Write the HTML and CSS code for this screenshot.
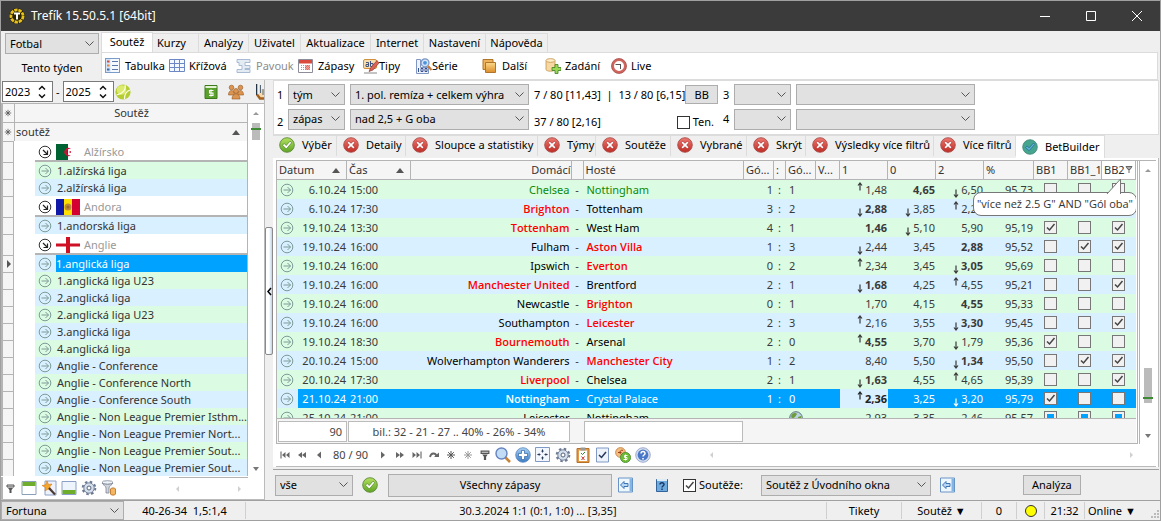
FILE: index.html
```html
<!DOCTYPE html>
<html lang="cs">
<head>
<meta charset="utf-8">
<title>Trefík</title>
<link rel="stylesheet" href="styles.css">
</head>
<body>
<svg class="defs" aria-hidden="true">
  <defs>
    <linearGradient id="gGreen" x1="0" y1="0" x2="0" y2="1"><stop offset="0" stop-color="#b4e05e"/><stop offset="1" stop-color="#5fa524"/></linearGradient>
    <linearGradient id="gRed" x1="0" y1="0" x2="0" y2="1"><stop offset="0" stop-color="#ee7a72"/><stop offset="1" stop-color="#c02a24"/></linearGradient>
    <linearGradient id="gBlue" x1="0" y1="0" x2="0" y2="1"><stop offset="0" stop-color="#a9d2f2"/><stop offset="1" stop-color="#3b7cc4"/></linearGradient>
    <linearGradient id="gGold" x1="0" y1="0" x2="0" y2="1"><stop offset="0" stop-color="#fbd98a"/><stop offset="1" stop-color="#dc8d2c"/></linearGradient>
  </defs>
  <symbol id="logo" viewBox="0 0 16 16"><circle cx="8" cy="8" r="7.8" fill="#111"/><circle cx="8" cy="8" r="6.1" fill="#2a2200" stroke="#e8c21a" stroke-width="2.8" stroke-dasharray="3.4 .8"/><path d="M5 4.500h6v2H9v5H7v-5H5z" fill="#fff"/></symbol>
  <symbol id="list" viewBox="0 0 16 16"><rect x=".5" y=".5" width="14" height="14" fill="#f6faff" stroke="#7a9cc9"/><path d="M1 1h4.500v13H1z" fill="#d5e4f6"/><path d="M2 2.500h2.500v2H2z" fill="#d2483a"/><path d="M2 6.500h2.500v2H2z" fill="#e08a3a"/><path d="M2 10.500h2.500v2H2z" fill="#3767ad"/><path d="M7 3.500h6M7 7.500h6M7 11.500h6" stroke="#5a78a8"/></symbol>
  <symbol id="gridi" viewBox="0 0 16 16"><path d="M.5 1.500h15v12H.5z" fill="#f4f9ff"/><path d="M.5 1.500h15v12H.5zM.5 5.500h15M.5 9.500h15M5.500 1.500v12M10.500 1.500v12" fill="none" stroke="#6d88c4"/></symbol>
  <symbol id="spider" viewBox="0 0 16 16"><path d="M1 1.500h13v3H9v3h5v3H9v1h5v3H1v-3h5v-4H3v-3H1z" fill="#e4ebf3" stroke="#a9bbd2"/></symbol>
  <symbol id="cal" viewBox="0 0 16 16"><path d="M.5 1.500h14v13H.5z" fill="#fff" stroke="#8c8c9a"/><path d="M1 2h13v3.500H1z" fill="#d9493c"/><path d="M3 7.500h9M3 9.500h9M3 11.500h9" stroke="#9a9aa5" stroke-dasharray="1 1"/><path d="M8 8h3v3H8z" fill="none" stroke="#d9493c"/></symbol>
  <symbol id="tips" viewBox="0 0 16 16"><rect x=".5" y="1.500" width="13" height="9" rx="1.500" fill="#f7dcae" stroke="#d0913c"/><path d="M3 4.500h2.500v4H3V6.500h2.500M7.500 3v5.500H10V5.500H7.500" fill="none" stroke="#42557c"/><path d="M14 2.500L16 5 10 12 6 13.500 7.500 10z" fill="#d9655a" stroke="#8a2820" stroke-width=".6"/><path d="M1 15h13" stroke="#c4c4c4" stroke-width="2"/></symbol>
  <symbol id="serie" viewBox="0 0 16 16"><path d="M.5 1.500h4v8h8v6H.5z" fill="#eef2fb" stroke="#8096c4"/><path d="M2.500 10v4M5 10.500h2v3H5zM9 10.500h2v3H9z" fill="none" stroke="#384f8e"/><circle cx="9" cy="4.800" r="4" fill="#cfe4fa" stroke="#7d95c0" stroke-width="1.300"/><circle cx="9" cy="4.800" r="1.900" fill="#4b91dc"/><path d="M12 8l3.500 4" stroke="#c67b36" stroke-width="2.200"/></symbol>
  <symbol id="folders" viewBox="0 0 16 16"><path d="M1 1.500h10v10H1z" fill="#eeb25a" stroke="#b0742a"/><path d="M3.500 4.500h10v10h-10z" fill="url(#gGold)" stroke="#b0742a"/></symbol>
  <symbol id="dbadd" viewBox="0 0 16 16"><path d="M1 2.500v9c0 2.300 9 2.300 9 0v-9z" fill="#f6d8a0" stroke="#c5964d" stroke-width=".8"/><ellipse cx="5.500" cy="2.500" rx="4.500" ry="1.900" fill="#fdecc9" stroke="#c5964d" stroke-width=".8"/><path d="M10 6.500h3v3h3v3h-3v3h-3v-3H7v-3h3z" fill="#9ad956" stroke="#3f7f1c" stroke-width=".8"/></symbol>
  <symbol id="live" viewBox="0 0 16 16"><circle cx="8" cy="8" r="6.300" fill="#fff" stroke="#d0655d" stroke-width="2.600"/><circle cx="8" cy="8" r="7.500" fill="none" stroke="#9d4640" stroke-width=".7"/><path d="M4.500 6.500h5M9.500 6v5" fill="none" stroke="#555"/></symbol>
  <symbol id="ball" viewBox="0 0 16 16"><circle cx="8" cy="8" r="7.600" fill="#b5cd33"/><circle cx="6.500" cy="6" r="4.800" fill="#dcea6d"/><path d="M10 1c1.500 4-2 9-8.500 10M15 6c-3 1-5.500 4-5.500 9" fill="none" stroke="#fbfde6" stroke-width="1.200"/></symbol>
  <symbol id="money" viewBox="0 0 16 16"><path d="M2 1.500h12v13H2z" fill="#5aa02c" stroke="#3d7a1c"/><path d="M2.500 2h11v2h-11z" fill="#e4f3d4"/><path d="M10.500 6.500h-4v2.500h3.500v2.500h-4M8 5.500v7" fill="none" stroke="#fff" stroke-width="1.100"/></symbol>
  <symbol id="people" viewBox="0 0 16 16"><g fill="#dc9450" stroke="#94581f" stroke-width=".6"><circle cx="3.500" cy="3.500" r="2.300"/><circle cx="12.500" cy="3.500" r="2.300"/><path d="M.5 11c0-6 6-6 6 0zM9.500 11c0-6 6-6 6 0z"/><circle cx="8" cy="7" r="2.500"/><path d="M4 15c0-7 8-7 8 0z"/></g></symbol>
  <symbol id="hand" viewBox="0 0 8 16"><path d="M3 1v10l2 3h3V6L5 5V1z" fill="#f8d9a8"/><path d="M.5 0v11" stroke="#234" stroke-width="1.500"/><path d="M4.500 1v8M7 5v6" stroke="#567" stroke-width="1"/><path d="M1 10.500l3 4h4" fill="none" stroke="#a2601c" stroke-width="2.500"/></symbol>
  <symbol id="ok" viewBox="0 0 16 16"><circle cx="8" cy="8" r="7.300" fill="url(#gGreen)" stroke="#5d8a3a" stroke-width=".9"/><path d="M3.500 8.200l1.700-1.700 2 2 3.800-4.300 1.700 1.500-5.400 6.300z" fill="#fff" stroke="#4a8020" stroke-width=".7"/></symbol>
  <symbol id="no" viewBox="0 0 16 16"><circle cx="8" cy="8" r="7.300" fill="url(#gRed)" stroke="#a8504a" stroke-width=".9"/><path d="M4.200 5.700l1.500-1.500L8 6.300l2.300-2.100 1.500 1.500L9.700 8l2.100 2.300-1.500 1.500L8 9.700l-2.300 2.100-1.500-1.500L6.300 8z" fill="#fff" stroke="#9c1a16" stroke-width=".6"/></symbol>
  <symbol id="bb" viewBox="0 0 16 16"><circle cx="8" cy="8" r="7.300" fill="#46a58e" stroke="#3c8575" stroke-width=".8"/><path d="M3.500 8.500l1.600-1.600 2 2L11.500 4l1.300 1.300-5.700 6.500z" fill="#5db4d8" stroke="#276f95" stroke-width=".8"/></symbol>
  <symbol id="go" viewBox="0 0 14 14"><circle cx="7" cy="7" r="5.800" fill="none" stroke="currentColor" stroke-width="1"/><path d="M3.500 7h7M7.500 4l3 3-3 3" fill="none" stroke="currentColor"/></symbol>
  <symbol id="down" viewBox="0 0 14 14"><circle cx="7" cy="7" r="5.800" fill="#fff" stroke="#333"/><path d="M5 5l4 4M9.500 5.500v4h-4" fill="none" stroke="#222" stroke-width="1.200"/></symbol>
  <symbol id="up-arrow" viewBox="0 0 6 9"><path d="M3 8.500V1M1 3.500l2-2.500 2 2.500" fill="none" stroke="currentColor" stroke-width="1.200"/></symbol>
  <symbol id="down-arrow" viewBox="0 0 6 9"><path d="M3 .5V8M1 5.500L3 8l2-2.500" fill="none" stroke="currentColor" stroke-width="1.200"/></symbol>
  <symbol id="f-dz" viewBox="0 0 24 16"><path d="M0 0h12v16H0z" fill="#006233"/><path d="M12 0h12v16H12z" fill="#fff"/><path d="M15 5a4 4 0 1 0 0 6 3.200 3.200 0 1 1 0-6zM12.500 8l2.500-1v2z" fill="#d21034"/></symbol>
  <symbol id="f-ad" viewBox="0 0 24 16"><path d="M0 0h8v16H0z" fill="#1018a8"/><path d="M8 0h8v16H8z" fill="#fedf00"/><path d="M16 0h8v16h-8z" fill="#d50032"/><circle cx="12" cy="8" r="3.500" fill="#c08a3a"/><circle cx="12" cy="8" r="1.500" fill="#9d6a28"/></symbol>
  <symbol id="f-en" viewBox="0 0 24 16"><path d="M0 0h24v16H0z" fill="#fff"/><path d="M10 0h4v16h-4zM0 6.500h24v3H0z" fill="#ce1124"/></symbol>
  <symbol id="funnel" viewBox="0 0 9 9"><path d="M1 1h7v2H1z" fill="#ddd" stroke="#555"/><path d="M2 4h5L5.500 6v3h-2V6z" fill="#555"/></symbol>
  <symbol id="ptop" viewBox="0 0 16 16"><path d="M1 1.500h14v13H1z" fill="#fff" stroke="#8ba0b8"/><path d="M1.500 2h13v4h-13z" fill="#6fae2c"/></symbol>
  <symbol id="pbot" viewBox="0 0 16 16"><path d="M1 1.500h14v13H1z" fill="#eef4fc" stroke="#8ba0c8"/><path d="M1.500 10h13v4h-13z" fill="#6fae2c"/></symbol>
  <symbol id="wand" viewBox="0 0 16 16"><path d="M4 1h11v14H4z" fill="#eef3fb" stroke="#8ba0c8"/><path d="M6 1l1.500 3.500L11 4 8.500 7l2 3.500L7 9l-3 2 .5-3.500L1 5.500l4-.8z" fill="#f7a62c" stroke="#d47a14" stroke-width=".6"/><path d="M8 8l6 6.500" stroke="#4a3a35" stroke-width="2.200"/></symbol>
  <symbol id="gear" viewBox="0 0 16 16"><circle cx="8" cy="8" r="6.300" fill="none" stroke="#6b7890" stroke-width="2" stroke-dasharray="2.500 2.450"/><circle cx="8" cy="8" r="5.200" fill="#d5deeb" stroke="#77869e"/><circle cx="8" cy="8" r="2" fill="#fff" stroke="#55637c"/></symbol>
  <symbol id="dbf" viewBox="0 0 16 16"><ellipse cx="6.500" cy="2.500" rx="5.500" ry="1.800" fill="#f2f4f7" stroke="#7c8798" stroke-width=".8"/><path d="M1 3c1 2 4 3 4 5v5h3V8c0-2 3-3 4-5-2 1.800-9 1.800-11 0z" fill="#cfd4dc" stroke="#7c8798" stroke-width=".8"/><path d="M9.500 9c0-1.500 5-1.500 5 0v5c0 1.500-5 1.500-5 0z" fill="#f3b764" stroke="#b5691c" stroke-width=".8"/></symbol>
  <symbol id="mag" viewBox="0 0 16 16"><path d="M10.500 10.500l4.500 4.500" stroke="#c98335" stroke-width="2.600"/><circle cx="6.500" cy="6.500" r="5.500" fill="#c3dcf6" stroke="#6484c0" stroke-width="1.400"/></symbol>
  <symbol id="plus" viewBox="0 0 16 16"><circle cx="8" cy="8" r="7.300" fill="url(#gBlue)" stroke="#5a86bf" stroke-width=".8"/><path d="M6.500 3.500h3v3h3v3h-3v3h-3v-3h-3v-3h3z" fill="#fff" stroke="#2f63a8" stroke-width=".7"/></symbol>
  <symbol id="move" viewBox="0 0 16 16"><path d="M.5 .5h14v14H.5z" fill="#f2f6fd" stroke="#8099c5"/><path d="M7.500 2.500v3M7.500 9.500v3M2.500 7.500h3M9.500 7.500h3" stroke="#2c3a58"/><path d="M6 4.500l1.500-2 1.500 2M6 10.500l1.500 2 1.500-2M4.500 6l-2 1.500 2 1.500M10.500 6l2 1.500-2 1.500" fill="#2c3a58"/></symbol>
  <symbol id="clip" viewBox="0 0 16 16"><path d="M2 1.500h12v14H2z" fill="#e39b45" stroke="#b5702a"/><path d="M4 3.500h8v10.500H4z" fill="#fff"/><path d="M5.500 .5h5v3h-5z" fill="#999"/><path d="M6 6l1.500 1.500L10 5" fill="none" stroke="#2e8a26"/><path d="M6.500 9.500l3 3.500M9.500 9.500l-3 3.500" stroke="#c9302a"/></symbol>
  <symbol id="tick" viewBox="0 0 16 16"><path d="M1.500 1h12v14h-12z" fill="#eef3fb" stroke="#8099c5"/><path d="M4 8l2.500 2.500L11 5" fill="none" stroke="#26365c" stroke-width="1.500"/></symbol>
  <symbol id="coins" viewBox="0 0 16 16"><circle cx="5.500" cy="5.500" r="4.900" fill="#f3bd80" stroke="#c07c3a" stroke-width=".8"/><path d="M8 3.500c-4-1.500-4 5 0 4M3 5.500h3.500" fill="none" stroke="#9a3c1c"/><circle cx="10.500" cy="10.500" r="5.100" fill="#6fba36" stroke="#44852a" stroke-width=".8"/><path d="M12.500 8.500h-3v2h2.500v2H8.500M10.500 7.500v6" fill="none" stroke="#fff" stroke-width=".9"/></symbol>
  <symbol id="help" viewBox="0 0 16 16"><circle cx="8" cy="8" r="7.300" fill="#d5deef" stroke="#8a9cc4" stroke-width=".8"/><circle cx="8" cy="8" r="5.400" fill="#4a78c8"/><path d="M6 6.500c0-3 4.200-2.500 4 0C10 8 8 8 8 9.500M8 11v1.500" fill="none" stroke="#fff" stroke-width="1.500"/></symbol>
  <symbol id="back" viewBox="0 0 16 16"><path d="M.5 1h14v14H.5z" fill="#eef6fe" stroke="#6a94c6"/><path d="M11.500 1.500h2.500v13h-2.500z" fill="#84b6e3"/><path d="M2.500 8L6 4.500v2h4v3H6v2z" fill="#b7d7f5" stroke="#2d69ad" stroke-width=".9"/></symbol>
  <symbol id="book" viewBox="0 0 16 16"><path d="M2.500 2.500h11v12h-11z" fill="#6faade" stroke="#326399"/><path d="M3 2h10v2H3z" fill="#dcebf8"/><path d="M6 7.500c0-2.500 4.200-2 4 0C10 9 8 9 8 10.500M8 11.500V13" fill="none" stroke="#153561" stroke-width="1.400"/></symbol>
  <symbol id="globe" viewBox="0 0 14 14"><circle cx="7" cy="7" r="6.300" fill="#b7d3e4" stroke="#5f7478"/><path d="M2 5c2-4 5-3 6-2L6 6 3 8zM9 6l3-1v4l-3 1z" fill="#6f9d3a"/></symbol>
  <symbol id="n-first" viewBox="0 0 12 10"><path d="M2 1.500v7" stroke="#555"/><path d="M6.500 2v6L3 5zM10.500 2v6L7 5z" fill="#666"/></symbol>
  <symbol id="n-prev2" viewBox="0 0 12 10"><path d="M6 2v6L2 5zM10 2v6L6 5z" fill="#666"/></symbol>
  <symbol id="n-prev" viewBox="0 0 12 10"><path d="M8 1.500v7L4 5z" fill="#666"/></symbol>
  <symbol id="n-redo" viewBox="0 0 12 10"><path d="M2 7c1-4.500 5.500-4.500 6.500-1" fill="none" stroke="#666" stroke-width="1.800"/><path d="M6 7h5V2.500z" fill="#666"/></symbol>
  <symbol id="n-star" viewBox="0 0 12 10"><path d="M6 1v8M2 5h8M3.200 2.200l5.600 5.600M8.800 2.200L3.200 7.800" stroke="currentColor"/></symbol>
</svg>

<div class="window">
  <header class="titlebar">
    <svg class="i16"><use href="#logo"/></svg>
    <h1>Trefík 15.50.5.1 [64bit]</h1>
    <button class="winbtn" aria-label="Minimalizovat"><svg viewBox="0 0 12 12"><path d="M1 6.500h10" stroke="#fff"/></svg></button>
    <button class="winbtn" aria-label="Maximalizovat"><svg viewBox="0 0 12 12"><path d="M1.500 1.500h9v9h-9z" fill="none" stroke="#fff"/></svg></button>
    <button class="winbtn" aria-label="Zavřít"><svg viewBox="0 0 12 12"><path d="M1 1l10 10M11 1L1 11" stroke="#fff"/></svg></button>
  </header>

  <div class="ribbon">
    <div class="sport">
      <select aria-label="Sport"><option>Fotbal</option></select>
      <span>Tento týden</span>
    </div>
    <div class="menu">
      <nav class="menu-tabs">
        <button class="active">Soutěž</button><button>Kurzy</button><button>Analýzy</button><button>Uživatel</button><button>Aktualizace</button><button>Internet</button><button>Nastavení</button><button>Nápověda</button>
      </nav>
      <div class="menu-tools">
        <button><svg class="i16"><use href="#list"/></svg>Tabulka</button>
        <button><svg class="i16"><use href="#gridi"/></svg>Křížová</button>
        <button disabled><svg class="i16"><use href="#spider"/></svg>Pavouk</button>
        <button><svg class="i16"><use href="#cal"/></svg>Zápasy</button>
        <button class="tight"><svg class="i16"><use href="#tips"/></svg>Tipy</button>
        <button class="tight"><svg class="i16"><use href="#serie"/></svg>Série</button>
        <button><svg class="i16"><use href="#folders"/></svg>Další</button>
        <button><svg class="i16"><use href="#dbadd"/></svg>Zadání</button>
        <button><svg class="i16"><use href="#live"/></svg>Live</button>
      </div>
    </div>
  </div>

  <main class="main">
    <aside class="side">
      <div class="years">
        <span class="spin"><input type="text" value="2023" aria-label="Od roku"><svg viewBox="0 0 8 14"><path d="M1 4.500L4 1.500l3 3M1 9.500l3 3 3-3" fill="none" stroke="#111" stroke-width="1.500"/></svg></span>
        <span>-</span>
        <span class="spin"><input type="text" value="2025" aria-label="Do roku"><svg viewBox="0 0 8 14"><path d="M1 4.500L4 1.500l3 3M1 9.500l3 3 3-3" fill="none" stroke="#111" stroke-width="1.500"/></svg></span>
        <svg class="i16"><use href="#ball"/></svg>
        <svg class="i16 far"><use href="#money"/></svg>
        <svg class="i16 next"><use href="#people"/></svg>
        <svg class="hand"><use href="#hand"/></svg>
      </div>
      <div class="side-grid">
        <table class="leagues">
          <colgroup><col class="c-ind"><col class="c-indent"><col class="c-go"><col></colgroup>
          <thead>
            <tr><th><svg class="star"><use href="#n-star"/></svg></th><th colspan="3" class="center">Soutěž</th></tr>
            <tr><th><svg class="star"><use href="#n-star"/></svg></th><th colspan="3"><div class="split"><span>soutěž</span><i class="tri"></i></div></th></tr>
          </thead>
          <tbody id="leagues"></tbody>
        </table>
        <div class="vscroll side-scroll"><i class="sa up"></i><i class="thumb"><b></b></i><i class="sa dn"></i></div>
      </div>
      <div class="side-tools">
        <svg class="i9"><use href="#funnel"/></svg>
        <svg class="i16"><use href="#ptop"/></svg><svg class="i16"><use href="#wand"/></svg><svg class="i16"><use href="#pbot"/></svg><svg class="i16"><use href="#gear"/></svg><svg class="i16"><use href="#dbf"/></svg>
        <div class="hscroll"><i class="ha l"></i><i class="ha r"></i></div>
      </div>
    </aside>

    <div class="splitter"><button aria-label="Skrýt panel"><svg viewBox="0 0 5 9"><path d="M4 1L1 4.500 4 8" fill="none" stroke="#000" stroke-width="1.500"/></svg></button></div>

    <section class="content">
      <div class="filters">
        <label for="f1">1</label><select id="f1"><option>tým</option></select><select aria-label="Filtr 1"><option>1. pol. remíza + celkem výhra</option></select>
        <div class="stat"><span>7 / 80 [11,43] &nbsp;|&nbsp; 13 / 80 [6,15]</span><button class="btn">BB</button></div>
        <label for="f3">3</label><select id="f3"><option></option></select><select aria-label="Filtr 3"><option></option></select>
        <label class="low" for="f2">2</label><select id="f2"><option>zápas</option></select><select aria-label="Filtr 2"><option>nad 2,5 + G oba</option></select>
        <div class="stat low"><span>37 / 80 [2,16]</span><label class="check"><input type="checkbox">Ten.</label></div>
        <label for="f4">4</label><select id="f4"><option></option></select><select aria-label="Filtr 4"><option></option></select>
      </div>

      <nav class="tabs">
        <button><svg class="i16"><use href="#ok"/></svg>Výběr</button>
        <button><svg class="i16"><use href="#no"/></svg>Detaily</button>
        <button><svg class="i16"><use href="#no"/></svg>Sloupce a statistiky</button>
        <button><svg class="i16"><use href="#no"/></svg>Týmy</button>
        <button><svg class="i16"><use href="#no"/></svg>Soutěže</button>
        <button><svg class="i16"><use href="#no"/></svg>Vybrané</button>
        <button><svg class="i16"><use href="#no"/></svg>Skrýt</button>
        <button><svg class="i16"><use href="#no"/></svg>Výsledky více filtrů</button>
        <button><svg class="i16"><use href="#no"/></svg>Více filtrů</button>
        <button class="active"><svg class="i16"><use href="#bb"/></svg>BetBuilder</button>
      </nav>

      <div class="sheet">
        <div class="sheet-grid">
          <div class="grid-col">
            <div class="grid-view">
              <table class="matches">
                <colgroup><col class="w21"><col class="w49"><col class="w64"><col><col class="w12"><col><col class="w30"><col class="w12"><col class="w30"><col class="w24"><col class="w48"><col class="w48"><col class="w48"><col class="w50"><col class="w34"><col class="w34"><col class="w34"></colgroup>
                <thead><tr>
                  <th colspan="2"><div class="split"><span>Datum</span><i class="tri"></i></div></th><th><div class="split"><span>Čas</span><i class="tri"></i></div></th><th class="right">Domácí</th><th></th><th>Hosté</th><th>Gó...</th><th>:</th><th>Gó...</th><th>V...</th><th>1</th><th>0</th><th>2</th><th>%</th><th>BB1</th><th>BB1_1</th>
                  <th class="hot">BB2<svg class="pin" viewBox="0 0 8 8"><path d="M1 1.500h6l-2 3H3zM4 4v4" fill="#aaa" stroke="#666"/></svg>
                    <div class="tip" role="tooltip">"více než 2.5 G" AND "Gól oba"<svg viewBox="0 0 16 16"><path d="M0 16L13.500 1v15" fill="#fff" stroke="#777"/></svg></div>
                  </th>
                </tr></thead>
                <tbody id="matches"></tbody>
              </table>
            </div>
            <div class="totals"><span class="t1">90</span><span class="t2">bil.: 32 - 21 - 27 .. 40% - 26% - 34%</span><span class="t3"></span></div>
          </div>
          <div class="vscroll main-scroll"><i class="sa up"></i><i class="thumb"><b></b></i><i class="sa dn"></i></div>
        </div>
        <div class="navbar">
          <button aria-label="První"><svg><use href="#n-first"/></svg></button><button aria-label="O stránku zpět"><svg><use href="#n-prev2"/></svg></button><button aria-label="Předchozí"><svg><use href="#n-prev"/></svg></button>
          <span class="pos">80 / 90</span>
          <button aria-label="Další"><svg class="flip"><use href="#n-prev"/></svg></button><button aria-label="O stránku dál"><svg class="flip"><use href="#n-prev2"/></svg></button><button aria-label="Poslední"><svg class="flip"><use href="#n-first"/></svg></button>
          <button aria-label="Obnovit"><svg><use href="#n-redo"/></svg></button><button aria-label="Záložka"><svg><use href="#n-star"/></svg></button><button class="dim" aria-label="Na záložku"><svg><use href="#n-star"/></svg></button><button aria-label="Filtr"><svg><use href="#funnel"/></svg></button>
          <div class="nav-icons"><svg class="i16"><use href="#mag"/></svg><svg class="i16"><use href="#plus"/></svg><svg class="i16"><use href="#move"/></svg><svg class="i16"><use href="#gear"/></svg><svg class="i16"><use href="#clip"/></svg><svg class="i16"><use href="#tick"/></svg><svg class="i16"><use href="#coins"/></svg><svg class="i16"><use href="#help"/></svg></div>
          <div class="hscroll"><i class="ha l"></i><i class="ha r"></i></div>
        </div>
      </div>

      <div class="actions">
        <select class="a-all" aria-label="Rozsah"><option>vše</option></select>
        <svg class="i16"><use href="#ok"/></svg>
        <button class="btn a-main">Všechny zápasy</button>
        <svg class="i16"><use href="#back"/></svg>
        <svg class="i16 a-book"><use href="#book"/></svg>
        <label class="check"><input type="checkbox" checked>Soutěže:</label>
        <select class="a-comp" aria-label="Soutěže"><option>Soutěž z Úvodního okna</option></select>
        <svg class="i16"><use href="#back"/></svg>
        <button class="btn a-run">Analýza</button>
      </div>
    </section>
  </main>

  <footer class="status">
    <select aria-label="Kancelář"><option>Fortuna</option></select>
    <span>40-26-34 &nbsp;1,5:1,4</span>
    <span class="strong">30.3.2024 1:1 (0:1, 1:0) ... [3,35]</span>
    <span>Tikety</span>
    <span>Soutěž ▼</span>
    <span>0</span>
    <span><i class="lamp"></i></span>
    <span>21:32</span>
    <span class="last">Online ▼<svg class="grip" viewBox="0 0 9 9"><path d="M6 0h2v2H6zM3 3h2v2H3zM6 3h2v2H6zM0 6h2v2H0zM3 6h2v2H3zM6 6h2v2H6z" fill="#bbb"/></svg></span>
  </footer>
</div>
<script src="app.js"></script>
</body>
</html>
```

FILE: styles.css
```css
* { box-sizing: border-box; }
body, h1 { margin: 0; }
body, button, select, input {
  font-family: "Noto Sans", "Open Sans", sans-serif;
  font-size: 11px;
  line-height: 16px;
  color: #000;
}
button { padding: 0; border: 0; background: none; white-space: nowrap; }
svg { display: block; flex: none; overflow: visible; }
.defs { position: absolute; width: 0; height: 0; }
.i16 { width: 16px; height: 16px; }
.i9 { width: 9px; height: 9px; }

select {
  appearance: none;
  height: 21px;
  padding: 0 18px 0 4px;
  border: 1px solid #adadad;
  border-radius: 0;
  background: #e1e1e1 url("data:image/svg+xml,%3Csvg xmlns='http://www.w3.org/2000/svg' width='9' height='6'%3E%3Cpath d='M.5 .5l4 4 4-4' fill='none' stroke='%23555'/%3E%3C/svg%3E") no-repeat right 4px center;
  min-width: 0;
}
.btn { border: 1px solid #adadad; background: #e1e1e1; }

input[type="checkbox"] {
  appearance: none;
  flex: none;
  display: block;
  width: 13px;
  height: 13px;
  margin: 0;
  border: 1px solid #333;
  background: #fff no-repeat center;
}
input[type="checkbox"]:checked {
  background-image: url("data:image/svg+xml,%3Csvg xmlns='http://www.w3.org/2000/svg' width='11' height='11'%3E%3Cpath d='M2 5.500l2.500 2.500 5-6' fill='none' stroke='%23444' stroke-width='1.500'/%3E%3C/svg%3E");
}
.check { display: flex; align-items: center; gap: 3px; }

.window {
  display: flex;
  flex-direction: column;
  height: 100vh;
  border: 1px solid #a0a0a0;
  background: #efefef;
}

/* title bar */
.titlebar { display: flex; align-items: center; height: 30px; flex: none; padding-left: 8px; background: #3b3b3b; }
.titlebar h1 { flex: 1; margin-left: 6px; font-size: 12px; font-weight: 400; color: #fff; }
.winbtn { display: grid; place-items: center; width: 46px; height: 30px; }
.winbtn svg { width: 12px; height: 12px; }

/* ribbon */
.ribbon { display: flex; flex: none; height: 49px; }
.sport { display: flex; flex-direction: column; width: 100px; padding: 2px 2px 0 4px; text-align: center; }
.sport span { margin-top: 6px; }
.menu { flex: 1; display: flex; flex-direction: column; padding-right: 2px; }
.menu-tabs { display: grid; grid-template-columns: 52px 46px 50px 52px 70px 53px 62px 62px; align-items: end; height: 21px; }
.menu-tabs button { height: 19px; border: 1px solid #dcdcdc; border-width: 1px 1px 0 0; }
.menu-tabs button:nth-child(2) { padding-right: 8px; }
.menu-tabs .active { height: 21px; margin-bottom: -1px; padding-bottom: 2px; border-left-width: 1px; background: #fff; }
.menu-tools {
  display: grid;
  grid-template-columns: 64px 67px 62px 65px 53px 66px 63px 66px 60px;
  height: 28px;
  padding-left: 3px;
  border: 1px solid #dcdcdc;
  background: #fff;
}
.menu-tools button { display: flex; align-items: center; gap: 4px; }
.menu-tools .tight { gap: 0; }
.menu-tools button:disabled { color: #8c8c8c; }

.main { flex: 1; display: flex; min-height: 0; }

/* left panel */
.side { display: flex; flex-direction: column; width: 264px; background: #fff; border-right: 1px solid #bbb; border-bottom: 1px solid #bbb; }
.years { display: flex; align-items: center; height: 23px; padding-left: 1px; background: #efefef; }
.years > span { flex: none; }
.years > span + span { margin-left: 3px; }
.years > .i16 { margin-left: 1px; }
.years > .far { margin-left: 72px; }
.years > .next { margin-left: 9px; }
.hand { width: 8px; height: 16px; margin-left: 12px; }
.spin { display: flex; align-items: center; width: 51px; height: 21px; padding-right: 6px; border: 1px solid #7a7a7a; background: #fff; }
.spin input { flex: 1; min-width: 0; padding: 0 0 0 2px; border: 0; background: none; }
.spin svg { width: 8px; height: 14px; }
.side-grid { flex: 1; display: flex; min-height: 0; overflow: hidden; }
table { border-collapse: separate; border-spacing: 0; table-layout: fixed; }
th, td { padding: 0; white-space: nowrap; overflow: hidden; font-weight: 400; text-align: left; }
.leagues { flex: 1; width: 0; height: max-content; border-left: 2px solid #b4b4b4; border-right: 1px solid #b4b4b4; color: #333; }
.c-ind { width: 11px; }
.c-indent { width: 21px; }
.c-go { width: 21px; }
.leagues th { height: 19px; border-top: 1px solid #b4b4b4; background: #f5f5f5; border-left: 1px solid #b4b4b4; padding-left: 1px; }
.leagues th:first-child { border-left: 0; padding: 0; }
.leagues .center { text-align: center; }
.leagues td:first-child { background: #f5f5f5; border-right: 1px solid #b4b4b4; border-top: 1px solid #b4b4b4; }
.leagues td { height: 17px; line-height: 16px; }
.leagues td svg { width: 14px; height: 14px; margin-left: 3px; }
.leagues .country td { height: 21px; color: #999; }
.leagues .country .name, .leagues .country .ic { padding-top: 2px; border-bottom: 2px solid #b4b4b4; }
.leagues .country .name > div { display: flex; align-items: center; gap: 4px; }
.leagues .country .name svg { width: 24px; height: 16px; margin: 0; }
.league .name { padding-left: 1px; }
.g .name, .g .ic { background: #dcfbe3; }
.b .name, .b .ic { background: #d8f0ff; }
.ic { color: #7d9c98; }
.league.sel .name { background: #00a2ff; color: #fff; padding-left: 0; }
.star { width: 10px; height: 8px; color: #555; }
.cursor { display: block; margin-left: 4px; border: 4px solid transparent; border-left-color: #555; border-right: 0; width: 0; }
.split { display: flex; align-items: center; justify-content: space-between; padding-right: 7px; }
.tri { border: 4px solid transparent; border-top: 0; border-bottom: 5px solid #555; }
.vscroll { display: flex; flex-direction: column; align-items: center; }
.sa { border: 3px solid transparent; }
.sa.up { border-top: 0; border-bottom: 3px solid #999; }
.sa.dn { border-bottom: 0; border-top: 4px solid #777; margin-top: auto; }
.thumb { width: 8px; background: #bbb; }
.thumb b { display: block; height: 2px; margin-right: -1px; margin-left: -1px; background: #3f8a34; }
.side-scroll { width: 16px; padding: 8px 0 6px; border-top: 1px solid #b4b4b4; }
.side-scroll .thumb { height: 17px; margin-top: 8px; padding-top: 5px; }
.side-tools { display: flex; align-items: center; gap: 4px; height: 22px; flex: none; padding-left: 3px; border-left: 2px solid #b4b4b4; }
.side-tools .i9 { margin-right: 2px; }
.hscroll { display: flex; flex: 1; justify-content: space-between; }
.ha { border: 3px solid transparent; }
.ha.l { border-left: 0; border-right-color: #d0d0d0; }
.ha.r { border-right: 0; border-left-color: #d0d0d0; }
.side-tools .hscroll { align-self: stretch; align-items: center; margin-left: 48px; margin-right: 16px; padding: 0 7px; border-top: 1px solid #b4b4b4; }

/* splitter */
.splitter { width: 8px; padding-top: 147px; }
.splitter button { display: grid; place-items: center; width: 8px; height: 128px; border: 1px solid #8a8a8a; border-radius: 2px; background: linear-gradient(90deg, #fff 50%, #bcd5ea); }
.splitter svg { width: 5px; height: 9px; }

/* right panel */
.content { flex: 1; display: flex; flex-direction: column; min-width: 0; padding-right: 1px; }
.filters {
  display: grid;
  grid-template-columns: 6px 57px 179px 184px 6px 57px 179px;
  column-gap: 5px;
  row-gap: 3px;
  align-items: center;
  flex: none;
  height: 55px;
  padding: 3px 3px 5px;
  border: 1px solid #dcdcdc;
  background: #fff;
}
.stat { display: flex; align-items: center; justify-content: space-between; white-space: nowrap; }
.stat .btn { width: 37px; height: 19px; }
.stat .check { padding-right: 4px; }
.filters .low { align-self: end; padding-top: 6px; }
.low > label { align-self: end; }

.tabs { display: grid; grid-template-columns: 64px 69px 132px 58px 75px 76px 59px 128px 82px 89px; align-items: end; flex: none; height: 23px; }
.tabs button { display: flex; align-items: center; gap: 7px; height: 21px; margin-bottom: 2px; padding: 0 0 2px 6px; border: 1px solid #dcdcdc; border-width: 1px 1px 0 0; }
.tabs .active { height: 23px; margin: 0; padding-bottom: 0; background: #fff; }

.sheet { flex: 1; display: flex; flex-direction: column; min-height: 0; padding: 2px 2px 0 3px; background: #fff; border-right: 1px solid #bbb; }
.sheet-grid { flex: 1; display: flex; min-height: 0; border-top: 1px solid #b4b4b4; }
.grid-col { flex: 1; display: flex; flex-direction: column; min-width: 0; border-left: 1px solid #b4b4b4; border-right: 1px solid #b4b4b4; padding-right: 1px; margin-right: 1px; border-bottom: 1px solid #b4b4b4; }
.grid-view { flex: 1; min-height: 0; overflow: hidden; }
.matches { width: 100%; color: #3a3a3a; }
.w12 { width: 12px; } .w21 { width: 21px; } .w24 { width: 24px; } .w30 { width: 30px; }
.w34 { width: 34px; } .w48 { width: 48px; } .w49 { width: 49px; } .w50 { width: 50px; } .w64 { width: 64px; }
.matches th { height: 19px; padding-left: 2px; border-right: 1px solid #b4b4b4; border-bottom: 1px solid #b4b4b4; background: #f5f5f5; color: #333; }
.matches th .split { padding-right: 6px; }
.matches .hot { position: relative; overflow: visible; background: #fff; }
.pin { position: absolute; top: 4px; right: 2px; width: 8px; height: 8px; }
.tip {
  position: absolute;
  z-index: 2;
  top: 31px;
  right: -2px;
  height: 24px;
  padding: 3px;
  border: 1px solid #777;
  border-radius: 8px;
  background: #fff;
  font-family: "Open Sans", "Noto Sans", sans-serif;
}
.tip svg { position: absolute; top: -15px; right: 13px; width: 16px; height: 16px; }
.matches td { height: 19px; padding-right: 1px; }
.matches .g { background: #dcfbe3; }
.matches .b { background: #d8f0ff; }
.matches td.ic { padding-left: 3px; }
.matches .ic svg { width: 14px; height: 14px; }
.right, .matches .r { text-align: right; }
.matches .cas, .matches .away, .matches .g2 { padding-left: 3px; }
.matches .mid { text-align: center; }
.matches .team, .matches .away { color: #000; }
.matches .home { padding-right: 2px; text-align: right; }
.matches .win { color: #f00; }
.matches .win, .matches .bold { font-family: "Open Sans", "Noto Sans", sans-serif; font-weight: 600; }
.matches .tipd { color: #0a8a0a; }
.matches strong { font-weight: 700; }
.odd { display: flex; align-items: center; justify-content: flex-end; gap: 2px; }
.odd svg { width: 6px; height: 9px; }
.odd .u { align-self: flex-start; }
.odd .d { align-self: flex-end; }
.matches .sel td { background: #00a2ff; color: #fff; }
.matches .sel td.ic { background: #d8f0ff; color: #7d9c98; }
.matches .sel td.cell { background: #d8f0ff; color: #222; }
.matches td input[type="checkbox"] { margin: 0 auto; border-color: #777; background-color: #f1f1f1; }
.matches td input.mixed { background-image: linear-gradient(#00a2ff, #00a2ff); background-size: 7px 7px; }
.matches .globe { width: 14px; height: 14px; }

.totals { display: flex; flex: none; height: 25px; padding: 2px 0 1px 1px; border-top: 1px solid #b4b4b4; background: #f5f5f5; color: #444; }
.totals span { height: 21px; padding: 2px 4px; border: 1px solid #bbb; background: #fff; white-space: nowrap; }
.t1 { width: 69px; text-align: right; }
.t2 { width: 222px; margin-left: 1px; text-align: center; }
.t3 { width: 159px; margin-left: 14px; }
.main-scroll { width: 17px; padding: 8px 0 6px; border-left: 1px solid #b4b4b4; }
.main-scroll .thumb { height: 35px; margin-top: 196px; padding-top: 29px; }

.navbar { display: flex; align-items: center; flex: none; height: 23px; border-bottom: 1px solid #bbb; color: #444; }
.navbar button { display: grid; place-items: center; width: 17px; height: 20px; color: #555; }
.navbar button svg { width: 12px; height: 10px; }
.navbar .dim { color: #999; }
.navbar .pos { width: 47px; text-align: center; }
.flip { transform: scaleX(-1); }
.nav-icons { display: flex; gap: 4px; margin-left: 2px; }
.navbar .hscroll { margin-left: 59px; padding-right: 23px; }

.actions { display: flex; align-items: center; flex: none; height: 31px; margin-top: 2px; padding: 0 0 0 2px; border-top: 1px solid #a0a0a0; }
.a-all { width: 78px; margin-right: 9px; }
.actions .a-main { flex: none; width: 224px; height: 23px; margin: 0 6px 0 10px; }
.a-book { margin-left: 20px; margin-right: 13px; }
.a-comp { width: 170px; margin: 0 9px 0 18px; }
.a-run { width: 58px; height: 20px; margin-left: 67px; }

/* status bar */
.status { display: grid; grid-template-columns: 123px 122px 1fr 75px 80px 35px 28px 40px 75px; align-items: center; flex: none; height: 20px; border-top: 1px solid #a0a0a0; white-space: nowrap; }
.status select { height: 19px; }
.status span { display: flex; align-items: center; justify-content: center; height: 17px; border-right: 1px solid #cfcfcf; }
.status .strong { font-family: "Open Sans", "Noto Sans", sans-serif; font-weight: 500; padding-left: 4px; }
.status .last { justify-content: space-between; padding-left: 3px; border: 0; }
.lamp { width: 12px; height: 12px; border: 1px solid #333; border-radius: 50%; background: #ff0; }
.grip { width: 9px; height: 9px; align-self: flex-end; }
```

FILE: app.js
```js
const icon = (id, cls = "") => `<svg class="${cls}"><use href="#${id}"/></svg>`;

/* Country rows are [name, flag]; league rows are plain strings. */
const leagues = [
  ["Alžírsko", "f-dz"], "g1.alžírská liga", "b2.alžírská liga",
  ["Andora", "f-ad"], "b1.andorská liga",
  ["Anglie", "f-en"], "b1.anglická liga", "g1.anglická liga U23", "b2.anglická liga",
  "g2.anglická liga U23", "b3.anglická liga", "g4.anglická liga",
  "bAnglie - Conference", "gAnglie - Conference North", "bAnglie - Conference South",
  "gAnglie - Non League Premier Isthm...", "bAnglie - Non League Premier Nort...",
  "gAnglie - Non League Premier Sout...", "bAnglie - Non League Premier Sout..."
];
document.getElementById("leagues").innerHTML = leagues.map((l, i) => {
  if (Array.isArray(l)) {
    return `<tr class="country"><td></td><td></td><td class="ic">${icon("down")}</td><td class="name"><div>${icon(l[1])}<span>${l[0]}</span></div></td></tr>`;
  }
  const sel = i === 6;
  return `<tr class="league ${l[0]}${sel ? " sel" : ""}"><td>${sel ? '<i class="cursor"></i>' : ""}</td><td></td><td class="ic">${icon("go")}</td><td class="name">${l.slice(1)}</td></tr>`;
}).join("");

const matches = [
  ["6.10.24", "15:00", "Chelsea", "Nottingham", "1", "1", "^1,48", "*4,65", "v6,50", "95,73", "000"],
  ["6.10.24", "17:30", "!Brighton", "Tottenham", "3", "2", "v*2,88", "v3,85", "^2,27", "", "000"],
  ["19.10.24", "13:30", "!Tottenham", "West Ham", "4", "1", "*1,46", "v5,10", "5,90", "95,19", "101"],
  ["19.10.24", "16:00", "Fulham", "!Aston Villa", "1", "3", "v2,44", "3,45", "*2,88", "95,52", "011"],
  ["19.10.24", "16:00", "Ipswich", "!Everton", "0", "2", "^2,34", "3,45", "v*3,05", "95,69", "000"],
  ["19.10.24", "16:00", "!Manchester United", "Brentford", "2", "1", "v*1,68", "4,25", "^4,55", "95,21", "001"],
  ["19.10.24", "16:00", "Newcastle", "!Brighton", "0", "1", "1,70", "4,15", "*4,55", "95,33", "000"],
  ["19.10.24", "16:00", "Southampton", "!Leicester", "2", "3", "^2,16", "3,55", "v*3,30", "95,45", "001"],
  ["19.10.24", "18:30", "!Bournemouth", "Arsenal", "2", "0", "^*4,55", "3,70", "v1,79", "95,36", "100"],
  ["20.10.24", "15:00", "Wolverhampton Wanderers", "!Manchester City", "1", "2", "8,40", "5,50", "v*1,34", "95,50", "011"],
  ["20.10.24", "17:30", "!Liverpool", "Chelsea", "2", "1", "v*1,63", "4,55", "^4,65", "95,39", "001"],
  ["21.10.24", "21:00", "Nottingham", "Crystal Palace", "1", "0", "^*2,36", "3,25", "v3,20", "95,79", "100"],
  ["25.10.24", "21:00", "Leicester", "Nottingham", "", "", "2,93", "3,35", "2,46", "95,57", "mmm"]
];
const odd = s => {
  const value = s.replace(/[\^v*]/g, "");
  const mark = s[0] === "^" ? icon("up-arrow", "u") : s[0] === "v" ? icon("down-arrow", "d") : "";
  return `<div class="odd">${mark}${s.includes("*") ? `<strong>${value}</strong>` : `<span>${value}</span>`}</div>`;
};
const team = (name, cls, extra) => `<td class="${cls} ${name[0] === "!" ? "win" : extra}">${name.replace("!", "")}</td>`;
document.getElementById("matches").innerHTML = matches.map((m, i) => {
  const sel = i === 11;
  const last = i === 12;
  const extra = i === 0 ? "tipd" : sel ? "" : "team";
  const checks = [...m[10]].map(c =>
    `<td><input type="checkbox" aria-label="BetBuilder"${c === "1" ? " checked" : ""}${c === "m" ? ' class="mixed"' : ""}></td>`).join("");
  return `<tr class="${i % 2 ? "b" : "g"}${sel ? " sel" : ""}"><td class="ic">${icon("go")}</td><td class="r">${m[0]}</td><td class="cas">${m[1]}</td>` +
    team(m[2], "home", sel ? "bold" : extra) + `<td class="mid">${last ? "" : "-"}</td>` + team(m[3], "away", extra) +
    `<td class="r">${m[4]}</td><td class="mid">${last ? "" : ":"}</td><td class="g2">${last ? icon("globe", "globe") : m[5]}</td><td></td>` +
    `<td class="cell">${odd(m[6])}</td><td>${odd(m[7])}</td><td>${odd(m[8])}</td><td class="r">${m[9]}</td>${checks}</tr>`;
}).join("");
```
